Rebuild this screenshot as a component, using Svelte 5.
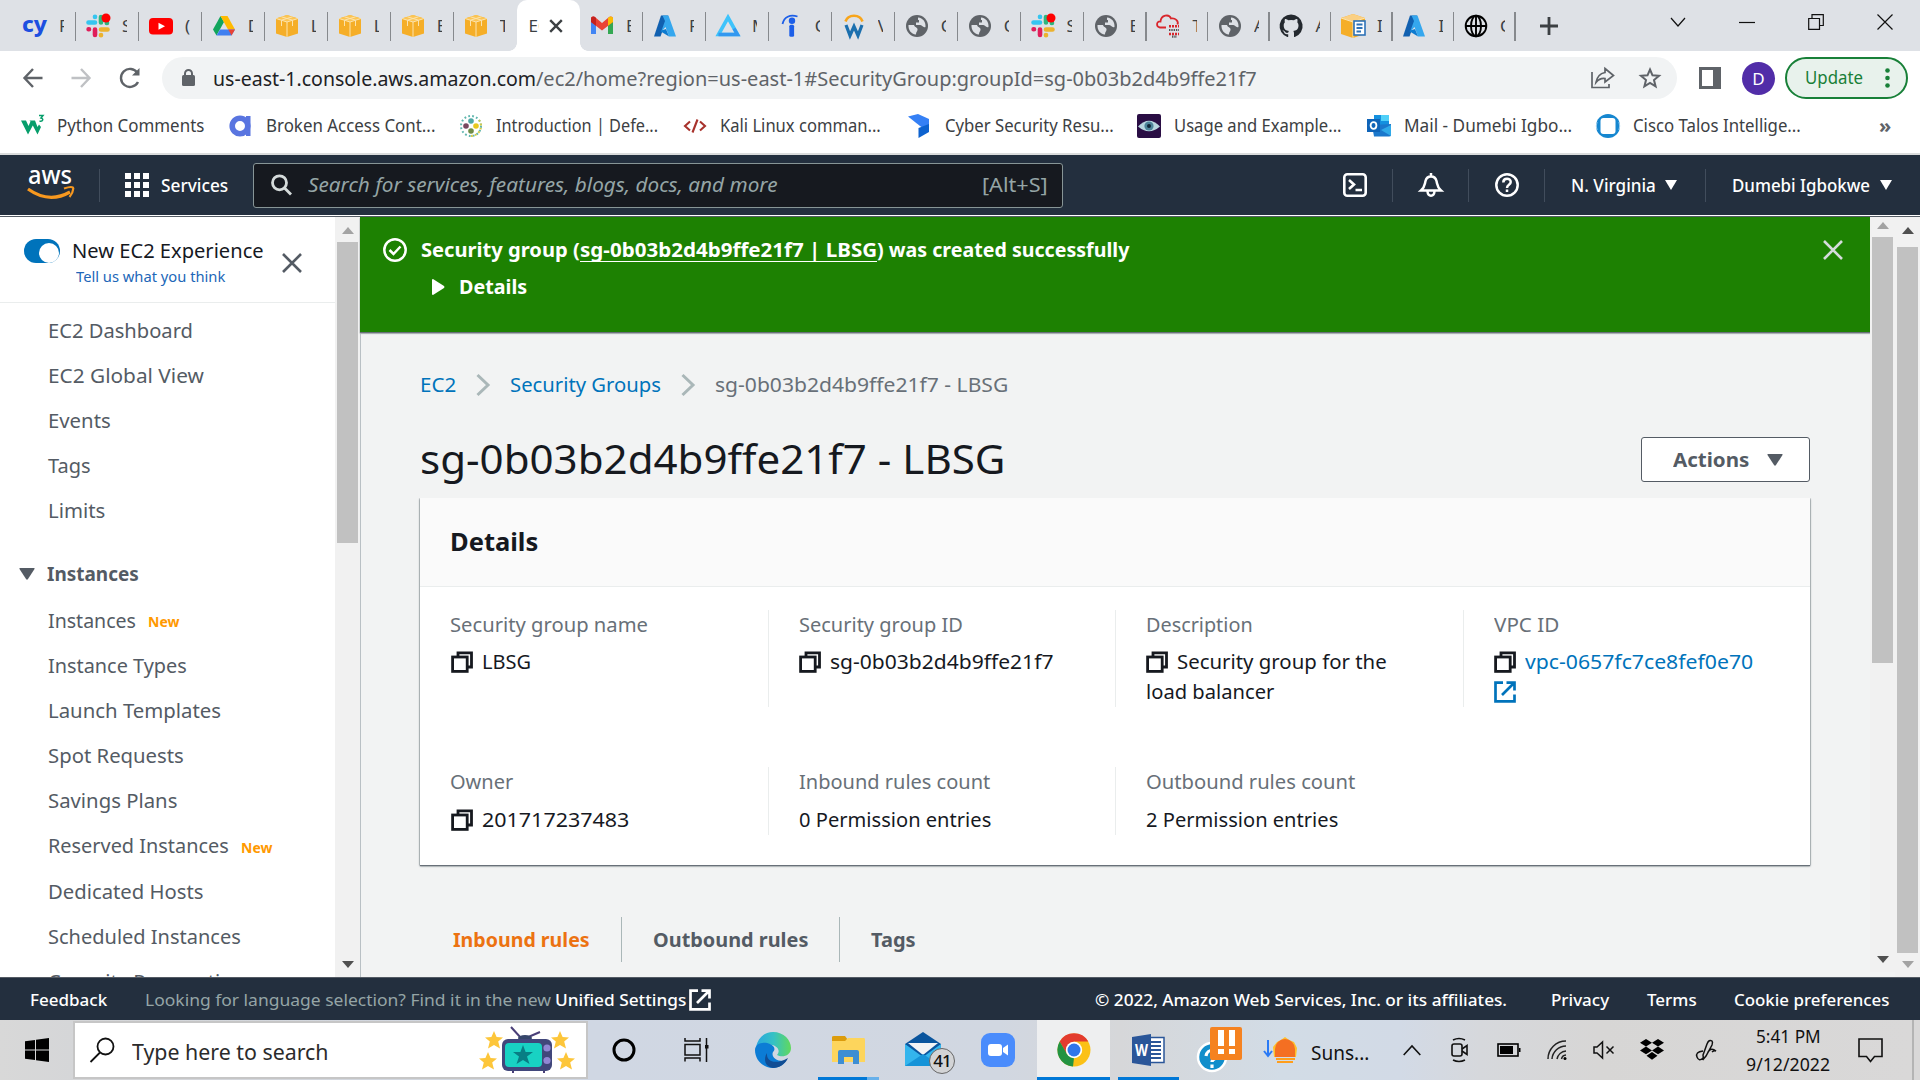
<script>
  // Scales a text run horizontally so that it fills its given width.
  function fit(node, w) {
    const run = () => {
      const n = node.offsetWidth;
      if (w && n) node.style.transform = `scaleX(${w / n})`;
    };
    run();
    document.fonts?.ready.then(run);
  }

  const tabs = [
    ['cy', 'F'], ['slack', 'S'], ['youtube', '('], ['drive', 'D'], ['cube', 'L'], ['cube', 'L'], ['cube', 'E'], ['cube', 'T'],
    ['active', 'EC'], ['gmail', 'E'], ['azure', 'F'], ['tri', 'M'], ['indeed', 'C'], ['wso', 'V'], ['globe', 'C'], ['globe', 'C'],
    ['slack', 'S'], ['globe', 'E'], ['cloud', 'T'], ['globe', 'A'], ['github', 'A'], ['cubedoc', 'I'], ['azure', 'I'], ['globe2', 'C']
  ];

  const bookmarks = [
    ['w3', 'Python Comments', 147], ['a', 'Broken Access Cont...', 169], ['dots', 'Introduction | Defe...', 162],
    ['code', 'Kali Linux comman...', 161], ['cyber', 'Cyber Security Resu...', 169], ['eye', 'Usage and Example...', 168],
    ['outlook', 'Mail - Dumebi Igbo...', 168], ['talos', 'Cisco Talos Intellige...', 168]
  ];

  const top = [['EC2 Dashboard', 145], ['EC2 Global View', 156], ['Events', 63], ['Tags', 43], ['Limits', 57]];
  const instances = [
    ['Instances', 88, true], ['Instance Types', 139], ['Launch Templates', 173], ['Spot Requests', 136], ['Savings Plans', 129],
    ['Reserved Instances', 181, true], ['Dedicated Hosts', 155], ['Scheduled Instances', 193], ['Capacity Reservations', 206]
  ];
</script>

{#snippet t(text, w)}<span class="t" style="width:{w}px"><span class="ti" use:fit={w}>{text}</span></span>{/snippet}

{#snippet copy()}
  <svg class="copy" width="22" height="22" viewBox="0 0 22 22" fill="none" stroke="#16191f" stroke-width="2.8"><path d="M7 5.500V1.8H20.5V16H16.500" /><rect x="1.6" y="6" width="14.6" height="14.4" fill="#fff" /></svg>
{/snippet}

{#snippet ext(color)}
  <svg class="ext" width="22" height="22" viewBox="0 0 22 22" fill="none" stroke={color} stroke-width="2.7"><path d="M9 1.6H1.5V20.4H20.5V13.5M12.5 1.6H20.5V9.5M20 2L8 14" /></svg>
{/snippet}

{#snippet icon(n)}
  <svg class="ic" width="24" height="24" viewBox="0 0 24 24">
    {#if n === 'cy'}
      <text x="-1" y="18" font-family="Noto Sans" font-weight="800" font-size="22" fill="#1d4fe0" textLength="25" lengthAdjust="spacingAndGlyphs">cy</text>
    {:else if n === 'slack'}
      <g stroke-width="4.6" stroke-linecap="round" fill="none"><path d="M9 8.5H2.5M9 2.7V3" stroke="#36c5f0" /><path d="M15 3V8.5M20.8 9H21" stroke="#2eb67d" /><path d="M9 15.5V21M3 15.3H2.6" stroke="#e01e5a" /><path d="M15 15.5H21.5M15 21V21.3" stroke="#ecb22e" /></g><circle cx="20" cy="4" r="4.5" fill="#f00" />
    {:else if n === 'youtube'}
      <rect y="4" width="24" height="16.5" rx="4" fill="#f00" /><path d="M9.5 8.7V15.7L16 12.2Z" fill="#fff" />
    {:else if n === 'drive'}
      <path d="M8.5 2L12 8L4.5 21.5L1 15.5Z" fill="#11a55c" /><path d="M8.5 2H15.5L23 15.5H16Z" fill="#ffba00" /><path d="M8 15.5H23L19.5 21.5H4.5Z" fill="#3f7ff0" /><path d="M16.2 15.5H23L19.5 21.5Z" fill="#ea4335" />
    {:else if n === 'cube'}
      <path d="M1 4.5L12 1L23 4.5V19.5L12 23L1 19.5Z" fill="#f5ae28" /><path d="M1 4.5L12 1L23 4.5L12 8Z" fill="#fcc554" /><path d="M12 8V23M1 4.5L12 8L23 4.5M6.5 2.8L17.5 6.2V12M17.5 2.8L6.5 6.2V12" fill="none" stroke="#fbe3ae" />
    {:else if n === 'gmail'}
      <path d="M1 5V20H6V10Z" fill="#4285f4" /><path d="M23 5V20H18V10Z" fill="#34a853" /><path d="M1 8V5C1 2 4 2 5.5 3.5L12 9L18.5 3.5C20 2 23 2 23 5V8L12 16.5Z" fill="#ea4335" /><path d="M18 4V11.8L23 8V5C23 2 20 2 18 4Z" fill="#fbbc04" /><path d="M1 5V8L6 11.8V4C4 2 1 2 1 5Z" fill="#c5221f" />
    {:else if n === 'azure'}
      <path d="M8 1.5H15L7.5 22.5H1Z" fill="#1160b0" /><path d="M9.5 1.5H15.5L23 22.5H16L12.5 13L8 18L12 7Z" fill="#35a7ee" /><path d="M7 17L13 15L16 22.5Z" fill="#0d7bd0" />
    {:else if n === 'tri'}
      <path d="M12 3.5L21.5 20.5H2.5Z" fill="none" stroke="#3ec3fb" stroke-width="3.6" /><path d="M2.5 20.5H21.5L18 14.5" fill="none" stroke="#3398f0" stroke-width="3.4" />
    {:else if n === 'indeed'}
      <circle cx="13" cy="6.8" r="3.2" fill="#1d5fe8" /><rect x="10.3" y="10.8" width="4.8" height="12" rx="1.5" fill="#1d5fe8" /><path d="M3.5 10C5 3 11 0 18.5 2.5" fill="none" stroke="#1d5fe8" stroke-width="1.8" />
    {:else if n === 'wso'}
      <path d="M3.500 7.500C6 -.2 18 -.2 20.500 7.500" fill="none" stroke="#f8a51b" stroke-width="2.600" /><path d="M4 11L8 21.500L12 12.500L16 21.500L20 11" fill="none" stroke="#1b6fae" stroke-width="3.200" />
    {:else if n === 'globe'}
      <circle cx="12" cy="12" r="11" fill="#5f6368" /><path d="M13 3.5C18 4 21 8 20.5 13C18 14 17 11 15 11H11V8.5H14V6H13ZM3.5 11H9C10 14 13 13 12.5 16C12 18 11 18 11 20.5C6 20 3.2 16 3.5 11Z" fill="#dee1e6" />
    {:else if n === 'globe2'}
      <g fill="none" stroke="#000" stroke-width="1.9"><circle cx="12" cy="12" r="10.3" /><ellipse cx="12" cy="12" rx="5" ry="10.3" /><path d="M12 2V22M2 12H22" /></g>
    {:else if n === 'cloud'}
      <path d="M10 13.5H4C0 13 0 7 4.5 7.5C5 1 13 -.5 15 4.5C19 3.5 23 7 21.5 10.5" fill="none" stroke="#d9262c" stroke-width="1.8" /><path d="M13 12.2H23M13 20H23" stroke="#d9262c" stroke-width="2.4" stroke-dasharray="2 1" /><path d="M13 16H23M16 22.6H21" stroke="#555" stroke-width="2.2" stroke-dasharray="1.4 .9" />
    {:else if n === 'github'}
      <path fill="#24292f" d="M12 .6a11.5 11.5 0 0 0-3.6 22.4c.6.1.8-.3.8-.6v-2.2c-3.2.7-3.9-1.4-3.9-1.4-.5-1.3-1.3-1.7-1.3-1.7-1-.7.1-.7.1-.7 1.2.1 1.8 1.2 1.8 1.2 1 1.8 2.7 1.3 3.4 1 .1-.8.4-1.3.7-1.6-2.6-.3-5.3-1.3-5.3-5.7 0-1.3.5-2.3 1.2-3.1-.1-.3-.5-1.5.1-3.1 0 0 1-.3 3.2 1.2a11 11 0 0 1 5.8 0c2.2-1.5 3.2-1.2 3.2-1.2.6 1.6.2 2.8.1 3.1.8.8 1.2 1.9 1.2 3.1 0 4.4-2.7 5.4-5.3 5.7.4.4.8 1.1.8 2.2v3.2c0 .3.2.7.8.6A11.5 11.5 0 0 0 12 .6z" />
    {:else if n === 'cubedoc'}
      <path d="M0 4L12 0L24 4V20L12 24L0 20Z" fill="#f5ae28" /><path d="M0 4L12 0L24 4L12 8Z" fill="#fbd083" /><path d="M12 8V24M0 4L12 8L24 4" stroke="#fbe3ae" fill="none" /><rect x="13" y="7" width="11" height="14" fill="#fff" stroke="#2d72b8" stroke-width="1.6" /><path d="M15.5 10.5H21.5M15.5 14H21.5M15.5 17.5H20" stroke="#2d72b8" stroke-width="1.8" />
    {:else if n === 'w3'}
      <path d="M1 6.500H6L8.500 12L10.500 7.500L9.500 6.500H15L17.500 13L19 10.500L21 13L17.500 20.500L12.800 11.500L8 20.500Z" fill="#079e6b" /><path d="M19 1.500H23L21 4C24 4.500 23 8 19.500 7" fill="none" stroke="#079e6b" stroke-width="1.500" />
    {:else if n === 'a'}
      <circle cx="11" cy="12" r="7.8" fill="none" stroke="#5975e0" stroke-width="5.6" /><rect x="17" y="2" width="4.5" height="20" fill="#5975e0" />
    {:else if n === 'dots'}
      <circle cx="12" cy="12" r="10" fill="none" stroke="#5fb6ad" stroke-width="2" stroke-dasharray="1.8 2.2" /><path d="M20 6A10 10 0 0 1 12 22" fill="none" stroke="#d5ca45" stroke-width="2" stroke-dasharray="1.8 2.2" /><circle cx="12" cy="7" r="2.8" fill="#4fa8a6" /><circle cx="7" cy="12" r="2.8" fill="#79485f" /><circle cx="17" cy="12" r="2.8" fill="#e8c81e" /><circle cx="12" cy="17" r="2.8" fill="#6f8c46" />
    {:else if n === 'code'}
      <path d="M7 7.5L2 12L7 16.5M17 7.5L22 12L17 16.5M14.5 5.5L9.5 18.5" fill="none" stroke="#a8322c" stroke-width="2.1" />
    {:else if n === 'cyber'}
      <path d="M0 2.5L10 0L21 5V18L12 12Z" fill="#3580f5" /><path d="M21 10V18L10.5 24V14Z" fill="#0d62cf" />
    {:else if n === 'eye'}
      <rect width="24" height="24" rx="2" fill="#2a0e44" /><path d="M1 12.5Q12 1 23 12.5Q12 22 1 12.5Z" fill="#b8d6df" /><circle cx="12" cy="12" r="4.6" fill="#4d8499" /><circle cx="12" cy="12" r="2" fill="#102638" />
    {:else if n === 'outlook'}
      <path d="M7 1H22V12H7Z" fill="#1490df" /><path d="M14 1H22V7H14Z" fill="#50d0f8" /><path d="M5 11L24 10V21Q24 22.5 22 22.5H7Z" fill="#1b78cc" /><path d="M24 11V22L14 16Z" fill="#30a9e8" /><rect y="5" width="13" height="13" fill="#0f64b8" /><ellipse cx="6.5" cy="11.5" rx="2.9" ry="3.3" fill="none" stroke="#fff" stroke-width="1.8" />
    {:else if n === 'talos'}
      <circle cx="12" cy="12" r="12" fill="#1687d0" /><rect x="4.500" y="4" width="15" height="16" rx="3" fill="#fff" /><path d="M1 16A12 12 0 0 1 1 8M23 16A12 12 0 0 0 23 8" fill="none" stroke="#a6d3f0" />
    {/if}
  </svg>
{/snippet}

<div class="screen">
  <div class="tabstrip">
    {#each tabs as [n, label], i}
      <div class="tab" class:on={n === 'active'} class:nosep={i === 7 || n === 'active'} class:slim={i > 17}>
        {#if n === 'active'}
          <span class="lbl">{label}</span>
          <svg width="14" height="14" viewBox="0 0 14 14" stroke="#3c4043" stroke-width="2.4"><path d="M1.2 1.2L12.8 12.8M12.8 1.2L1.2 12.8" /></svg>
        {:else}
          {@render icon(n)}<span class="lbl">{label}</span>
        {/if}
      </div>
    {/each}
    <svg class="plus" width="18" height="18" viewBox="0 0 18 18" stroke="#3c4043" stroke-width="2.8"><path d="M9 0V18M0 9H18" /></svg>
    <div class="win">
      <svg width="16" height="10" viewBox="0 0 16 10"><path d="M1 1L8 9L15 1" /></svg>
      <svg width="16" height="16" viewBox="0 0 16 16"><path d="M0 8.5H16" /></svg>
      <svg width="16" height="16" viewBox="0 0 16 16"><path d="M.7 4.5H11.5V15.3H.7ZM4 4.5V.7H15.3V11.5H11.5" /></svg>
      <svg width="16" height="16" viewBox="0 0 16 16"><path d="M.5 .5L15.5 15.5M15.5 .5L.5 15.5" /></svg>
    </div>
  </div>

  <div class="toolbar">
    <div class="navbtns">
      <svg width="20" height="20" viewBox="0 0 20 20" stroke="#5f6368"><path d="M19.5 10H2M10 1L1.5 10L10 19" /></svg>
      <svg width="20" height="20" viewBox="0 0 20 20" stroke="#bfc1c4"><path d="M.5 10H18M10 1L18.5 10L10 19" /></svg>
      <svg width="22" height="22" viewBox="0 0 22 22" stroke="#5f6368"><path d="M19 15A9 9 0 1 1 18.5 6" /><path d="M20.5 1V8.5H13Z" fill="#5f6368" stroke="none" /></svg>
    </div>
    <div class="url">
      <svg width="14" height="18" viewBox="0 0 14 18"><rect y="6" width="13" height="11" rx="1.5" fill="#5f6368" /><path d="M3 7V4.5A3.5 3.5 0 0 1 10 4.5V7" fill="none" stroke="#5f6368" stroke-width="2" /></svg>
      <div class="addr"><b>{@render t('us-east-1.console.aws.amazon.com', 323)}</b>{@render t('/ec2/home?region=us-east-1#SecurityGroup:groupId=sg-0b03b2d4b9ffe21f7', 721)}</div>
      <svg width="24" height="22" viewBox="0 0 24 22" fill="none" stroke="#5f6368" stroke-width="1.7"><path d="M1 5V20.5H18V17M14 1.5L22.5 8.5L14 15V11.5C9.500 11 7 13 5 15.500C6 9.500 9 6.500 14 5.500Z" /></svg>
      <svg width="22" height="22" viewBox="0 0 22 22" fill="none" stroke="#5f6368" stroke-width="2"><path d="M11 2.500L13.500 8.300L20 8.800L15 13L16.600 19.400L11 16L5.400 19.400L7 13L2 8.800L8.500 8.300Z" /></svg>
    </div>
    <svg class="panel" width="22" height="22" viewBox="0 0 22 22"><rect width="22" height="22" fill="#5f6368" /><rect x="3" y="3" width="11" height="16" fill="#fff" /></svg>
    <div class="avatar">D</div>
    <div class="update">{@render t('Update', 58)}<svg width="5" height="20" viewBox="0 0 5 20" fill="#188038"><circle cx="2.5" cy="2.5" r="2.3" /><circle cx="2.5" cy="10" r="2.300" /><circle cx="2.500" cy="17.500" r="2.300" /></svg></div>
  </div>

  <div class="bookmarks">
    {#each bookmarks as [n, label, w]}
      <div class="bm">{@render icon(n)}{@render t(label, w)}</div>
    {/each}
    <div class="more">»</div>
  </div>

  <div class="aws">
    <svg class="logo" width="48" height="38" viewBox="0 0 48 38"><text x="1" y="18" font-family="Noto Sans" font-weight="500" font-size="26" fill="#fff" textLength="44" lengthAdjust="spacingAndGlyphs">aws</text><path d="M1 23Q22 38 43 26" fill="none" stroke="#f7981f" stroke-width="3.200" /><path d="M37 22.500Q46 19.500 46.300 22.500Q46 27 42.500 31" fill="none" stroke="#f7981f" stroke-width="2.200" /></svg>
    <i class="d1"></i>
    <svg class="nine" width="24" height="24" viewBox="0 0 24 24" fill="#fff"><path d="M0 0H6V6H0ZM9 0H15V6H9ZM18 0H24V6H18ZM0 9H6V15H0ZM9 9H15V15H9ZM18 9H24V15H18ZM0 18H6V24H0ZM9 18H15V24H9ZM18 18H24V24H18Z" /></svg>
    <div class="services">{@render t('Services', 67)}</div>
    <div class="search">
      <svg width="22" height="22" viewBox="0 0 22 22" fill="none" stroke="#d5dbdb" stroke-width="2.800"><circle cx="8.500" cy="8.800" r="7" /><path d="M13.500 14L20 20.500" /></svg>
      <em>{@render t('Search for services, features, blogs, docs, and more', 470)}</em>
      {@render t('[Alt+S]', 66)}
    </div>
    <div class="right">
      <svg width="24" height="24" viewBox="0 0 24 24" fill="none" stroke="#fff" stroke-width="2.600"><rect x="1.300" y="1.300" width="21.400" height="21.400" rx="3" /><path d="M6 7L11 11.500L6 16M12.500 17H19" /></svg>
      <i></i>
      <svg width="24" height="24" viewBox="0 0 24 24" fill="none" stroke="#fff" stroke-width="2.500"><path d="M2 17.500C6 14 5.500 12 6.500 8C7.500 4 10 3.500 12 3.500C14 3.500 16.500 4 17.500 8C18.500 12 18 14 22 17.500ZM12 0V3.500M8.500 18.500C9 24 15 24 15.500 18.500" /></svg>
      <i></i>
      <svg width="24" height="24" viewBox="0 0 24 24" fill="none" stroke="#fff" stroke-width="2.500"><circle cx="12" cy="12" r="10.700" /><path d="M8.300 9.500C8.300 4.500 15.700 4.800 15.700 9C15.700 12 12 11.500 12 15M12 16.500V19" /></svg>
      <i></i>
      <div class="dd region">{@render t('N. Virginia', 85)}<svg width="12" height="10" viewBox="0 0 12 10"><path d="M0 0H12L6 10Z" fill="#fff" /></svg></div>
      <i></i>
      <div class="dd">{@render t('Dumebi Igbokwe', 138)}<svg width="12" height="10" viewBox="0 0 12 10"><path d="M0 0H12L6 10Z" fill="#fff" /></svg></div>
    </div>
  </div>

  <div class="body">
    <div class="side">
      <div class="exp">
        <div class="toggle"><span></span></div>
        <div class="exptext"><div>{@render t('New EC2 Experience', 192)}</div><div class="tell">{@render t('Tell us what you think', 149)}</div></div>
        <svg width="20" height="20" viewBox="0 0 20 20" stroke="#545b64" stroke-width="2.600"><path d="M1 1L19 19M19 1L1 19" /></svg>
      </div>
      <div class="menu">
        {#each top as [label, w]}<div class="item">{@render t(label, w)}</div>{/each}
        <div class="group"><svg width="16" height="12" viewBox="0 0 16 12"><path d="M1 0H15Q16 0 15.500 1L9 11Q8 12.500 7 11L.5 1Q0 0 1 0Z" fill="#545b64" /></svg>{@render t('Instances', 92)}</div>
        {#each instances as [label, w, fresh]}<div class="item">{@render t(label, w)}{#if fresh}<b>{@render t('New', 31)}</b>{/if}</div>{/each}
      </div>
    </div>
    <div class="bar left"><svg width="12" height="7"><path d="M0 7L6 0L12 7Z" fill="#a3a3a3" /></svg><div></div><svg width="12" height="7"><path d="M0 0L6 7L12 0Z" fill="#505050" /></svg></div>

    <div class="main">
      <div class="flash">
        <svg width="24" height="24" viewBox="0 0 24 24" fill="none" stroke="#fff" stroke-width="2.500"><circle cx="12" cy="12" r="10.700" /><path d="M6.500 12L10.500 16L17.500 8.500" /></svg>
        <div class="msg">
          <div>{@render t('Security group (', 159)}<u>{@render t('sg-0b03b2d4b9ffe21f7 | LBSG', 297)}</u>{@render t(') was created successfully', 252)}</div>
          <div class="det"><svg width="13" height="16" viewBox="0 0 13 16"><path d="M1 0L12 7Q13 8 12 9L1 16Q0 16 0 15V1Q0 0 1 0Z" fill="#fff" /></svg>{@render t('Details', 68)}</div>
        </div>
        <svg class="x" width="20" height="20" viewBox="0 0 20 20" stroke="#d5dbdb" stroke-width="2.600"><path d="M1 1L19 19M19 1L1 19" /></svg>
      </div>
      <div class="page">
        <div class="crumbs"><div class="link">{@render t('EC2', 36)}</div><svg width="14" height="22" viewBox="0 0 14 22"><path d="M1.500 1L12 11L1.500 21" /></svg><div class="link">{@render t('Security Groups', 151)}</div><svg width="14" height="22" viewBox="0 0 14 22"><path d="M1.500 1L12 11L1.500 21" /></svg><div>{@render t('sg-0b03b2d4b9ffe21f7 - LBSG', 293)}</div></div>
        <div class="head"><h1>{@render t('sg-0b03b2d4b9ffe21f7 - LBSG', 586)}</h1><div class="btn">{@render t('Actions', 76)}<svg width="16" height="12" viewBox="0 0 16 12"><path d="M1 0H15Q16 0 15.500 1L9 11Q8 12.500 7 11L.5 1Q0 0 1 0Z" fill="#545b64" /></svg></div></div>
        <div class="card">
          <div class="cardhead">{@render t('Details', 88)}</div>
          <div class="fields">
            <div class="f"><div class="k">{@render t('Security group name', 198)}</div><div class="v">{@render copy()}{@render t('LBSG', 49)}</div></div>
            <div class="f"><div class="k">{@render t('Security group ID', 164)}</div><div class="v">{@render copy()}{@render t('sg-0b03b2d4b9ffe21f7', 223)}</div></div>
            <div class="f"><div class="k">{@render t('Description', 107)}</div><div class="v">{@render copy()}{@render t('Security group for the', 210)}</div><div class="v2">{@render t('load balancer', 128)}</div></div>
            <div class="f"><div class="k">{@render t('VPC ID', 65)}</div><div class="v lk">{@render copy()}{@render t('vpc-0657fc7ce8fef0e70', 228)}</div><div class="v2 out">{@render ext('#0073bb')}</div></div>
            <div class="f"><div class="k">{@render t('Owner', 63)}</div><div class="v">{@render copy()}{@render t('201717237483', 147)}</div></div>
            <div class="f"><div class="k">{@render t('Inbound rules count', 191)}</div><div class="v">{@render t('0 Permission entries', 192)}</div></div>
            <div class="f"><div class="k">{@render t('Outbound rules count', 209)}</div><div class="v">{@render t('2 Permission entries', 192)}</div></div>
          </div>
        </div>
        <div class="tabs"><div class="cur">{@render t('Inbound rules', 137)}</div><div>{@render t('Outbound rules', 155)}</div><div>{@render t('Tags', 45)}</div></div>
      </div>
    </div>
    <div class="bar inner"><svg width="12" height="7"><path d="M0 7L6 0L12 7Z" fill="#a3a3a3" /></svg><div></div><svg width="12" height="7"><path d="M0 0L6 7L12 0Z" fill="#505050" /></svg></div>
    <div class="bar outer"><svg width="12" height="7"><path d="M0 7L6 0L12 7Z" fill="#505050" /></svg><div></div><svg width="12" height="7"><path d="M0 0L6 7L12 0Z" fill="#a3a3a3" /></svg></div>
  </div>

  <div class="footer">
    <b class="fb">{@render t('Feedback', 77)}</b><div class="hint">{@render t('Looking for language selection? Find it in the new', 406)}</div><b>{@render t('Unified Settings', 131)}</b>{@render ext('#fff')}
    <b class="copyright">{@render t('© 2022, Amazon Web Services, Inc. or its affiliates.', 412)}</b><b class="pr">{@render t('Privacy', 58)}</b><b class="te">{@render t('Terms', 50)}</b><b>{@render t('Cookie preferences', 155)}</b>
  </div>

  <div class="task">
    <div class="c"><svg width="24" height="24" viewBox="0 0 24 24"><path d="M0 3.300L10 2V11.400H0ZM11 1.800L24 0V11.400H11ZM0 12.500H10V22L0 20.700ZM11 12.500H24V24L11 22.200Z" /></svg></div>
    <div class="sbox">
      <svg width="26" height="26" viewBox="0 0 26 26" fill="none" stroke="#111" stroke-width="1.800"><circle cx="16.500" cy="9.500" r="8" /><path d="M11 15.500L1.500 25" /></svg>
      <div class="ph">{@render t('Type here to search', 197)}</div>
      <svg width="99" height="47" viewBox="0 0 99 47">
        {#each [[16, 13], [10, 34], [82, 13], [88, 34]] as [x, y]}
          <path transform="translate({x} {y})" d="M0 -9L2.600 -3L9 -2.600L4.200 1.500L6 8.500L0 5L-6 8.500L-4.200 1.500L-9 -2.600L-2.600 -3Z" fill="#fdc63a" />
        {/each}
        <path d="M33 0L43 11M62 5L48 11M35 41V46M66 41V46" stroke="#4a3f78" stroke-width="2" /><ellipse cx="47" cy="11" rx="7" ry="3" fill="#36466b" /><rect x="24" y="12" width="50" height="32" rx="6" fill="#41477b" /><rect x="27" y="16" width="37" height="24" rx="4" fill="#18d2c3" /><path d="M45 18L47.600 25H55L49 29.500L51.500 37L45 33L38.500 37L41 29.500L35 25H42.400Z" fill="#087e84" /><circle cx="69" cy="21" r="3.600" fill="#9187d4" /><circle cx="69" cy="33.500" r="3.600" fill="#9187d4" />
      </svg>
    </div>
    <div class="c"><svg width="24" height="24" viewBox="0 0 24 24"><circle cx="12" cy="12" r="10" fill="none" stroke="#000" stroke-width="3" /></svg></div>
    <div class="c"><svg width="25" height="24" viewBox="0 0 25 24" fill="none" stroke="#111" stroke-width="1.500"><path d="M1 0V3H16V0M1 6.500H16V17H1ZM1 23.500V20H16V23.500M22.500 0V24" /><rect x="21" y="7" width="3.500" height="3.500" fill="#111" stroke="none" /></svg></div>
    <div class="c"><svg width="36" height="36" viewBox="0 0 36 36"><defs><linearGradient id="eg"><stop offset="0" stop-color="#29a7df" /><stop offset=".5" stop-color="#35c1c5" /><stop offset="1" stop-color="#61d95c" /></linearGradient></defs><path d="M1 15C3 5 10 0 18 0C29 0 36 8 36 16C36 24 27 26 22 23C26 18 22 14 17 13Q8 10 1 15Z" fill="url(#eg)" /><path d="M0 18C0 11 9 9 15 12C19 14 21 17 18 20C16 24 20 30 31 29C27 34 22 36 18 36C8 36 0 28 0 18Z" fill="#0c7cd5" /><path d="M12 21C11 30 21 33 33 26C30 33 23 36 18 36C10 35 8 27 12 21Z" fill="#114d94" /></svg></div>
    <div class="c ul two"><svg width="33" height="28" viewBox="0 0 33 28"><path d="M0 1Q0 0 2 0H13L16 4V8H0Z" fill="#dc9c0c" /><path d="M0 5H13L16 2H32Q33 2 33 4V26H0Z" fill="#fdd55c" /><path d="M6 28V16Q6 14 8 14H25Q27 14 27 16V28H21V21H12V28Z" fill="#3d8ed3" /></svg></div>
    <div class="c"><svg width="36" height="36" viewBox="0 0 36 36"><path d="M0 12L18 0L36 12V34H0Z" fill="#0a559e" /><path d="M0 12L18 25L36 12V34H0Z" fill="#33b5ed" /><path d="M3 11H33L18 23Z" fill="#f2f3f5" /><path d="M0 34L18 22L36 34Z" fill="#1593d8" /></svg><span class="badge">41</span></div>
    <div class="c"><svg width="34" height="34" viewBox="0 0 34 34"><rect width="34" height="34" rx="9" fill="#4a8cfc" /><rect x="7" y="11" width="14" height="12" rx="3" fill="#fff" /><path d="M22 15L27 11.500V22.500L22 19Z" fill="#fff" /></svg></div>
    <div class="c hot ul"><svg width="34" height="34" viewBox="0 0 34 34"><circle cx="17" cy="17" r="16.500" fill="#fbc116" /><path d="M2.700 8.500A16.500 16.500 0 0 1 31.300 8.500H17L9.500 20.500Z" fill="#e33b2e" /><path d="M2.700 8.500L10 21L17 25L16 33.500A16.500 16.500 0 0 1 2.700 8.500Z" fill="#229342" /><circle cx="17" cy="17" r="8.200" fill="#fff" /><circle cx="17" cy="17" r="6.500" fill="#3076ea" /></svg></div>
    <div class="c ul word"><svg width="33" height="32" viewBox="0 0 33 32"><rect x="15" y="3.500" width="17" height="25" fill="#fff" stroke="#2a5699" stroke-width="1.500" /><path d="M19 8H29M19 12H29M19 16H29M19 20H29M19 24H29" stroke="#2a5699" stroke-width="1.800" /><path d="M0 3L19 0V32L0 29Z" fill="#2a5699" /><text x="3" y="22" font-family="Noto Sans" font-weight="700" font-size="16" fill="#fff" textLength="13" lengthAdjust="spacingAndGlyphs">W</text></svg></div>
    <div class="c"><svg width="46" height="48" viewBox="0 0 46 48"><circle cx="15" cy="31" r="14" fill="#118ecb" stroke="#fff" stroke-width="2.500" /><path d="M9 30C10 22 21 23 21 29C21 33 15 32 15 36M15 38.500V42" fill="none" stroke="#fff" stroke-width="3.200" /><rect x="13" y="1" width="32" height="33" rx="2" fill="#f58220" /><path d="M24 4V20M35 4V20M24 23V28M35 23V28" stroke="#fff" stroke-width="6" /></svg></div>
    <div class="c"><svg width="34" height="26" viewBox="0 0 34 26"><path d="M4 3V18M0 14L4 19L8 14" stroke="#2a7af5" stroke-width="2" fill="none" /><path d="M10 20L9 10L13 5L17 3L21 0L25 3L30 5L33 11L32 20Z" fill="#ffc029" /><path d="M11 20V12A9.500 9.500 0 0 1 31 12V20Z" fill="#f46f22" /><path d="M12 22H31M13 25H29" stroke="#ff9e1b" stroke-width="2" /></svg></div>
    <div class="suns">{@render t('Suns...', 58)}</div>
    <div class="c"><svg width="18" height="11" viewBox="0 0 18 11" fill="none" stroke="#111" stroke-width="1.600"><path d="M.7 10L9 1L17.300 10" /></svg></div>
    <div class="c"><svg width="18" height="24" viewBox="0 0 18 24" fill="none" stroke="#111" stroke-width="1.600"><rect x="1" y="6" width="10" height="12" rx="2" /><path d="M11 11L16 7.500V16.500L11 13M2 2Q8 -1 14 2M2 22Q8 25 14 22" /></svg></div>
    <div class="c"><svg width="24" height="14" viewBox="0 0 24 14"><rect x="1" y="1" width="20" height="12" fill="none" stroke="#000" stroke-width="1.600" /><path d="M3 3H16V11H3ZM22 5H23.500V9H22Z" /></svg></div>
    <div class="c"><svg width="20" height="22" viewBox="0 0 20 22" fill="none" stroke="#222" stroke-width="1.500"><path d="M1 20A18 18 0 0 1 19 2M5 20A14 14 0 0 1 19 7M10 20A10 10 0 0 1 19 12M14.500 20A5 5 0 0 1 19 16" /><circle cx="18" cy="19.500" r="1.500" fill="#000" stroke="none" /></svg></div>
    <div class="c"><svg width="22" height="18" viewBox="0 0 22 18" fill="none" stroke="#111" stroke-width="1.500"><path d="M1 6V12H4L9.500 17V1L4 6ZM13.500 5.500L20.500 12.500M20.500 5.500L13.500 12.500" /></svg></div>
    <div class="c"><svg width="24" height="22" viewBox="0 0 24 22"><path d="M6 0L12 3.800L6 7.600L0 3.800ZM18 0L24 3.800L18 7.600L12 3.800ZM6 7.600L12 11.400L6 15.200L0 11.400ZM18 7.600L24 11.400L18 15.200L12 11.400ZM12 13L17.500 16.800L12 20.800L6.500 16.800Z" /></svg></div>
    <div class="c"><svg width="22" height="22" viewBox="0 0 22 22" fill="none" stroke="#111" stroke-width="1.500"><path d="M17 2Q14 0 12 5L8 16L8.500 20L11 17L17 6Q18 3 17 2ZM8 12Q0 13 2 18Q4 23 8 19M13 13Q16 8 21 12Q19 11 17 13" /></svg></div>
    <div class="clock"><div>{@render t('5:41 PM', 65)}</div><div>{@render t('9/12/2022', 84)}</div></div>
    <div class="c"><svg width="25" height="25" viewBox="0 0 25 25" fill="none" stroke="#111" stroke-width="1.600"><path d="M1 1H24V18.500H16.500L12.500 23.500L8.500 18.500H1Z" /></svg></div>
    <div></div>
    <div class="peek"></div>
  </div>
</div>

<style>
  :global(body) { margin: 0; overflow: hidden; }
  .screen { width: 1920px; height: 1080px; display: flex; flex-direction: column; overflow: hidden; font-family: 'Noto Sans', 'Open Sans', sans-serif; font-size: 20px; line-height: 24px; color: #16191f; background: #fff; }
  .t { display: inline-block; flex: none; white-space: nowrap; height: 1.2em; line-height: 1.2em; vertical-align: top; }
  .ti { display: inline-block; transform-origin: 0 50%; }
  svg { overflow: visible; flex: none; display: block; }

  .tabstrip { height: 51px; flex: none; background: #dee1e6; display: flex; align-items: center; padding-left: 13px; }
  .tab { width: 62.950px; height: 51px; box-sizing: border-box; display: flex; align-items: center; padding-left: 10px; gap: 12px; position: relative; font-size: 17px; color: #3c4043; flex: none; }
  .tab.slim { width: 61.500px; }
  .tab:not(.nosep)::after { content: ''; position: absolute; right: -.5px; top: 12px; width: 1.500px; height: 29px; background: #86898d; }
  .lbl { width: 5px; overflow: hidden; white-space: nowrap; line-height: 22px; }
  .tab.on { background: #fff; border-radius: 10px 10px 0 0; padding-left: 12px; gap: 10px; width: 63.500px; }
  .tab.on .lbl { width: 10px; }
  .tab.on::before { content: ''; position: absolute; left: -8px; right: -8px; bottom: 0; height: 8px; background: radial-gradient(circle at 0 0, transparent 7.500px, #fff 8px) 0 0 / 8px 8px no-repeat, radial-gradient(circle at 100% 0, transparent 7.500px, #fff 8px) 100% 0 / 8px 8px no-repeat; }
  .plus { margin-left: 25px; }
  .win { margin-left: auto; margin-right: 27px; margin-bottom: 8px; display: flex; gap: 53px; align-items: center; }
  .win svg { fill: none; stroke: #111; stroke-width: 1.200; }

  .toolbar { height: 54px; flex: none; display: flex; align-items: center; box-sizing: border-box; padding: 0 12px 0 0; }
  .navbtns { width: 162px; box-sizing: border-box; padding-left: 23px; display: flex; align-items: center; gap: 28px; }
  .navbtns svg { fill: none; stroke-width: 2.400; }
  .url { width: 1516px; height: 42px; border-radius: 21px; background: #f1f3f4; display: flex; align-items: center; box-sizing: border-box; padding: 0 16px 0 20px; }
  .addr { margin-left: 17px; margin-right: auto; color: #5f6368; white-space: nowrap; display: flex; padding-top: 1px; }
  .addr b { font-weight: 400; color: #202124; display: flex; }
  .url svg:last-child { margin-left: 24px; }
  .panel { margin-left: 22px; }
  .avatar { width: 33px; height: 33px; border-radius: 50%; background: #512da8; color: #fff; margin-left: 21px; text-align: center; line-height: 33px; font-size: 17px; }
  .update { margin-left: 10px; width: 123px; height: 42px; box-sizing: border-box; border: 2px solid #188038; border-radius: 21px; background: #e8f2ec; color: #188038; font-size: 18px; display: flex; align-items: center; padding-left: 18px; gap: 22px; }

  .bookmarks { flex: none; box-sizing: border-box; height: 52px; margin-top: -2px; padding: 0 0 5px 20px; border-bottom: 2px solid #dadcdc; display: grid; grid-template-columns: 209px 230px 224px 225px 229px 230px 229px 284px 20px; align-items: center; font-size: 17.500px; color: #3c4043; }
  .bm { display: flex; align-items: center; gap: 12.500px; }
  .more { font-size: 20px; line-height: 20px; font-weight: 700; color: #5f6368; margin-left: -1px; }

  .aws { height: 60px; flex: none; background: #232f3e; display: flex; align-items: center; color: #fff; font-size: 17.500px; font-weight: 500; border-bottom: 1px solid #fff; }
  .logo { margin: 0 0 0 27px; }
  .aws i { width: 1px; height: 33px; background: #414d5c; flex: none; }
  .d1 { margin: 0 25px 0 24px; }
  .services { margin: 0 25px 0 12px; display: flex; }
  .search { width: 810px; height: 45px; box-sizing: border-box; background: #16191f; border: 1px solid #879596; border-radius: 3px; display: flex; align-items: center; padding: 0 14px 0 17px; font-size: 20px; color: #95a5a6; font-weight: 400; }
  .search em { margin: 0 auto 0 15px; display: flex; }
  .right { flex: 1; display: grid; grid-template-columns: 24px 2px 24px 2px 24px 2px 109px 2px 160px; column-gap: 25px; justify-content: end; align-items: center; padding-right: 28px; }
  .dd { display: flex; align-items: center; justify-content: space-between; }
  .region { padding-right: 3px; }

  .body { height: 762px; flex: none; box-sizing: border-box; border-top: 1px solid #545b64; display: flex; overflow: hidden; background: #f2f3f3; border-bottom: 1px solid #545b64; }
  .side { width: 335px; flex: none; background: #fff; }
  .exp { height: 85px; border-bottom: 1px solid #eaeded; display: flex; padding-left: 24px; box-sizing: content-box; }
  .toggle { width: 36px; height: 24px; border-radius: 12px; background: #0073bb; margin-top: 22px; flex: none; }
  .toggle span { display: block; width: 20px; height: 20px; border-radius: 50%; background: #fff; margin: 2px 0 0 15px; }
  .toggle span { position: relative; top: 2px; }
  .exptext { margin: 22px 18px 0 12px; }
  .exptext > div { height: 25px; }
  .exptext .tell { font-size: 15px; color: #2166b8; padding-left: 4px; padding-top: 3px; line-height: 18px; }
  .exp svg { margin-top: 36px; }
  .menu { padding-top: 5px; color: #545b64; }
  .item { height: 45.200px; padding-left: 48px; display: flex; align-items: center; box-sizing: border-box; }
  .item b { font-size: 14px; color: #ff9900; margin: 3px 0 0 12px; display: flex; font-weight: 700; }
  .group { display: flex; align-items: center; padding: 15px 0 0 19px; box-sizing: border-box; height: 65px; margin-bottom: -1px; gap: 12px; font-weight: 700; }

  .bar { width: 25px; flex: none; background: #f1f1f1; display: flex; flex-direction: column; align-items: center; box-sizing: border-box; }
  .bar div { width: 21px; background: #c1c1c1; flex: none; }
  .bar svg:last-child { margin-top: auto; }
  .left { padding: 10px 0 9px; }
  .left div { height: 301px; margin-top: 8px; }
  .inner { padding: 5px 0 14px; border-bottom: 5px solid #f2f3f3; }
  .inner svg:last-child { margin-bottom: -5px; }
  .inner div { height: 426px; margin-top: 8px; }
  .outer { padding: 10px 0 9px; }
  .outer div { height: 706px; margin-top: 13px; }

  .main { width: 1510px; flex: none; box-sizing: border-box; border-left: 1px solid #b9c0c4; }
  .flash { height: 115px; background: #1d8102; margin-left: -1px; color: #fff; font-weight: 700; display: flex; box-sizing: border-box; padding: 21px 27px 0 23px; box-shadow: 0 1px 1px #687078, 0 2px 1px #b8bdc0; }
  .msg { margin: 0 auto 0 14px; }
  .msg > div { display: flex; height: 37px; align-items: flex-start; }
  .msg u { text-decoration: none; border-bottom: 1.500px solid #fff; height: 23px; }
  .det svg { margin: 4px 14px 0 11px; }
  .flash .x { margin-top: 2px; }
  .page { padding: 0 60px 0 59px; }
  .crumbs { margin-top: 41px; height: 24px; display: flex; align-items: center; color: #687078; }
  .crumbs div { display: flex; }
  .crumbs .link { color: #0073bb; }
  .crumbs svg { fill: none; stroke: #aab7b8; stroke-width: 3; margin: 0 20px; }
  .head { display: flex; justify-content: space-between; align-items: center; margin-top: 40px; height: 45px; }
  h1 { font-size: 40px; font-weight: 400; margin: 0 0 2px; line-height: 48px; height: 48px; }
  .btn { width: 169px; height: 45px; box-sizing: border-box; border: 1.500px solid #545b64; border-radius: 3px; background: #fff; color: #545b64; font-weight: 700; display: flex; align-items: center; padding-left: 31px; gap: 18px; }
  .card { margin-top: 16px; height: 367px; background: #fff; box-shadow: 0 1px 1px #687078, 0 1px 2px #687078, 0 0 1px #879596; clip-path: inset(0 -3px -4px -3px); }
  .cardhead { height: 89px; box-sizing: border-box; background: #fafafa; border-bottom: 1px solid #eaeded; font-size: 25.500px; font-weight: 700; display: flex; align-items: center; padding: 0 0 1px 30px; }
  .fields { display: grid; grid-template-columns: 348px 347px 348px 347px; grid-template-rows: 97px 68px; row-gap: 60px; padding-top: 23px; }
  .f { box-sizing: border-box; padding-left: 30px; border-left: 1px solid #eaeded; }
  .f:nth-child(4n + 1) { border-left-color: transparent; padding-left: 29px; }
  .k { color: #687078; height: 40px; padding-top: 3px; box-sizing: border-box; }
  .v { display: flex; height: 30px; gap: 9px; }
  .f:nth-child(n + 5) .v { padding-top: 1px; }
  .f:nth-child(4n + 1) .v { padding-left: 1px; }
  .copy { margin-top: 1px; }
  .lk { color: #0073bb; }
  .out { padding-top: 1px; }
  .tabs { margin-top: 52px; height: 45px; display: flex; font-weight: 700; color: #545b64; }
  .tabs div { display: flex; align-items: center; padding: 0 31px; border-right: 1px solid #aab7b8; }
  .tabs div:first-child { padding-left: 33px; color: #ec7211; }
  .tabs div:last-child { border: 0; }

  .footer { height: 42px; flex: none; background: #232f3e; color: #fff; display: flex; align-items: center; font-size: 17px; padding: 2px 0 0 30px; box-sizing: border-box; }
  .footer b { font-weight: 500; display: flex; }
  .hint { color: #95a5a6; margin: 0 4px 0 38px; display: flex; }
  .footer .ext { margin-left: 3px; }
  .footer .copyright { margin-left: 384px; }
  .footer .pr { margin: 0 38px 0 44px; }
  .footer .te { margin-right: 37px; }

  .task { height: 60px; flex: none; display: grid; grid-template-columns: 73px 519px 64px 80px 74px 77px 72px 78px 73px 76px 68px 54px 80px 48px 48px 49px 48px 46px 50px 58px 106px 58px 13px 8px; background: linear-gradient(90deg, #d8d8d8 0, #d5d6d8 73px, #d0d7e3 590px, #d1d7e1 1000px, #d6d7d9 1120px, #d2dce6 1280px, #d2dae6 1400px, #d6d8dc 1480px, #d7d6d5 1600px, #d9d8d8 1912px); color: #111; }
  .c { display: flex; align-items: center; justify-content: center; position: relative; box-sizing: border-box; min-width: 0; }
  .sbox { box-sizing: border-box; border: 2px solid #c6c6c6; background: #fff; height: 58px; margin: 1px 4px 0 0; display: flex; align-items: center; padding: 0 9px 0 14px; font-size: 22px; color: #2b2b2b; }
  .ph { margin: 2px auto 0 17px; display: flex; }
  .hot { background: #eeeff0; }
  .ul::after { content: ''; position: absolute; left: 0; right: 0; bottom: 0; height: 3px; background: #0078d7; }
  .two::after { left: 8px; right: 8px; background: linear-gradient(90deg, #0078d7 81%, #67b0ea 81%); }
  .word::after { left: 8px; right: 7px; }
  .badge { position: absolute; left: 42px; top: 28px; width: 26px; height: 26px; box-sizing: border-box; border: 1.500px solid #666; border-radius: 50%; background: #d3d4d6; font-size: 17px; line-height: 23px; text-align: center; letter-spacing: -1px; font-weight: 500; }
  .suns { display: flex; align-items: center; padding: 5px 0 0 3px; }
  .clock { display: flex; flex-direction: column; align-items: center; font-size: 17.500px; padding-top: 6px; gap: 7px; }
  .clock div { height: 21px; }
  .peek { border-left: 2px solid #b4b4b4; }
</style>
